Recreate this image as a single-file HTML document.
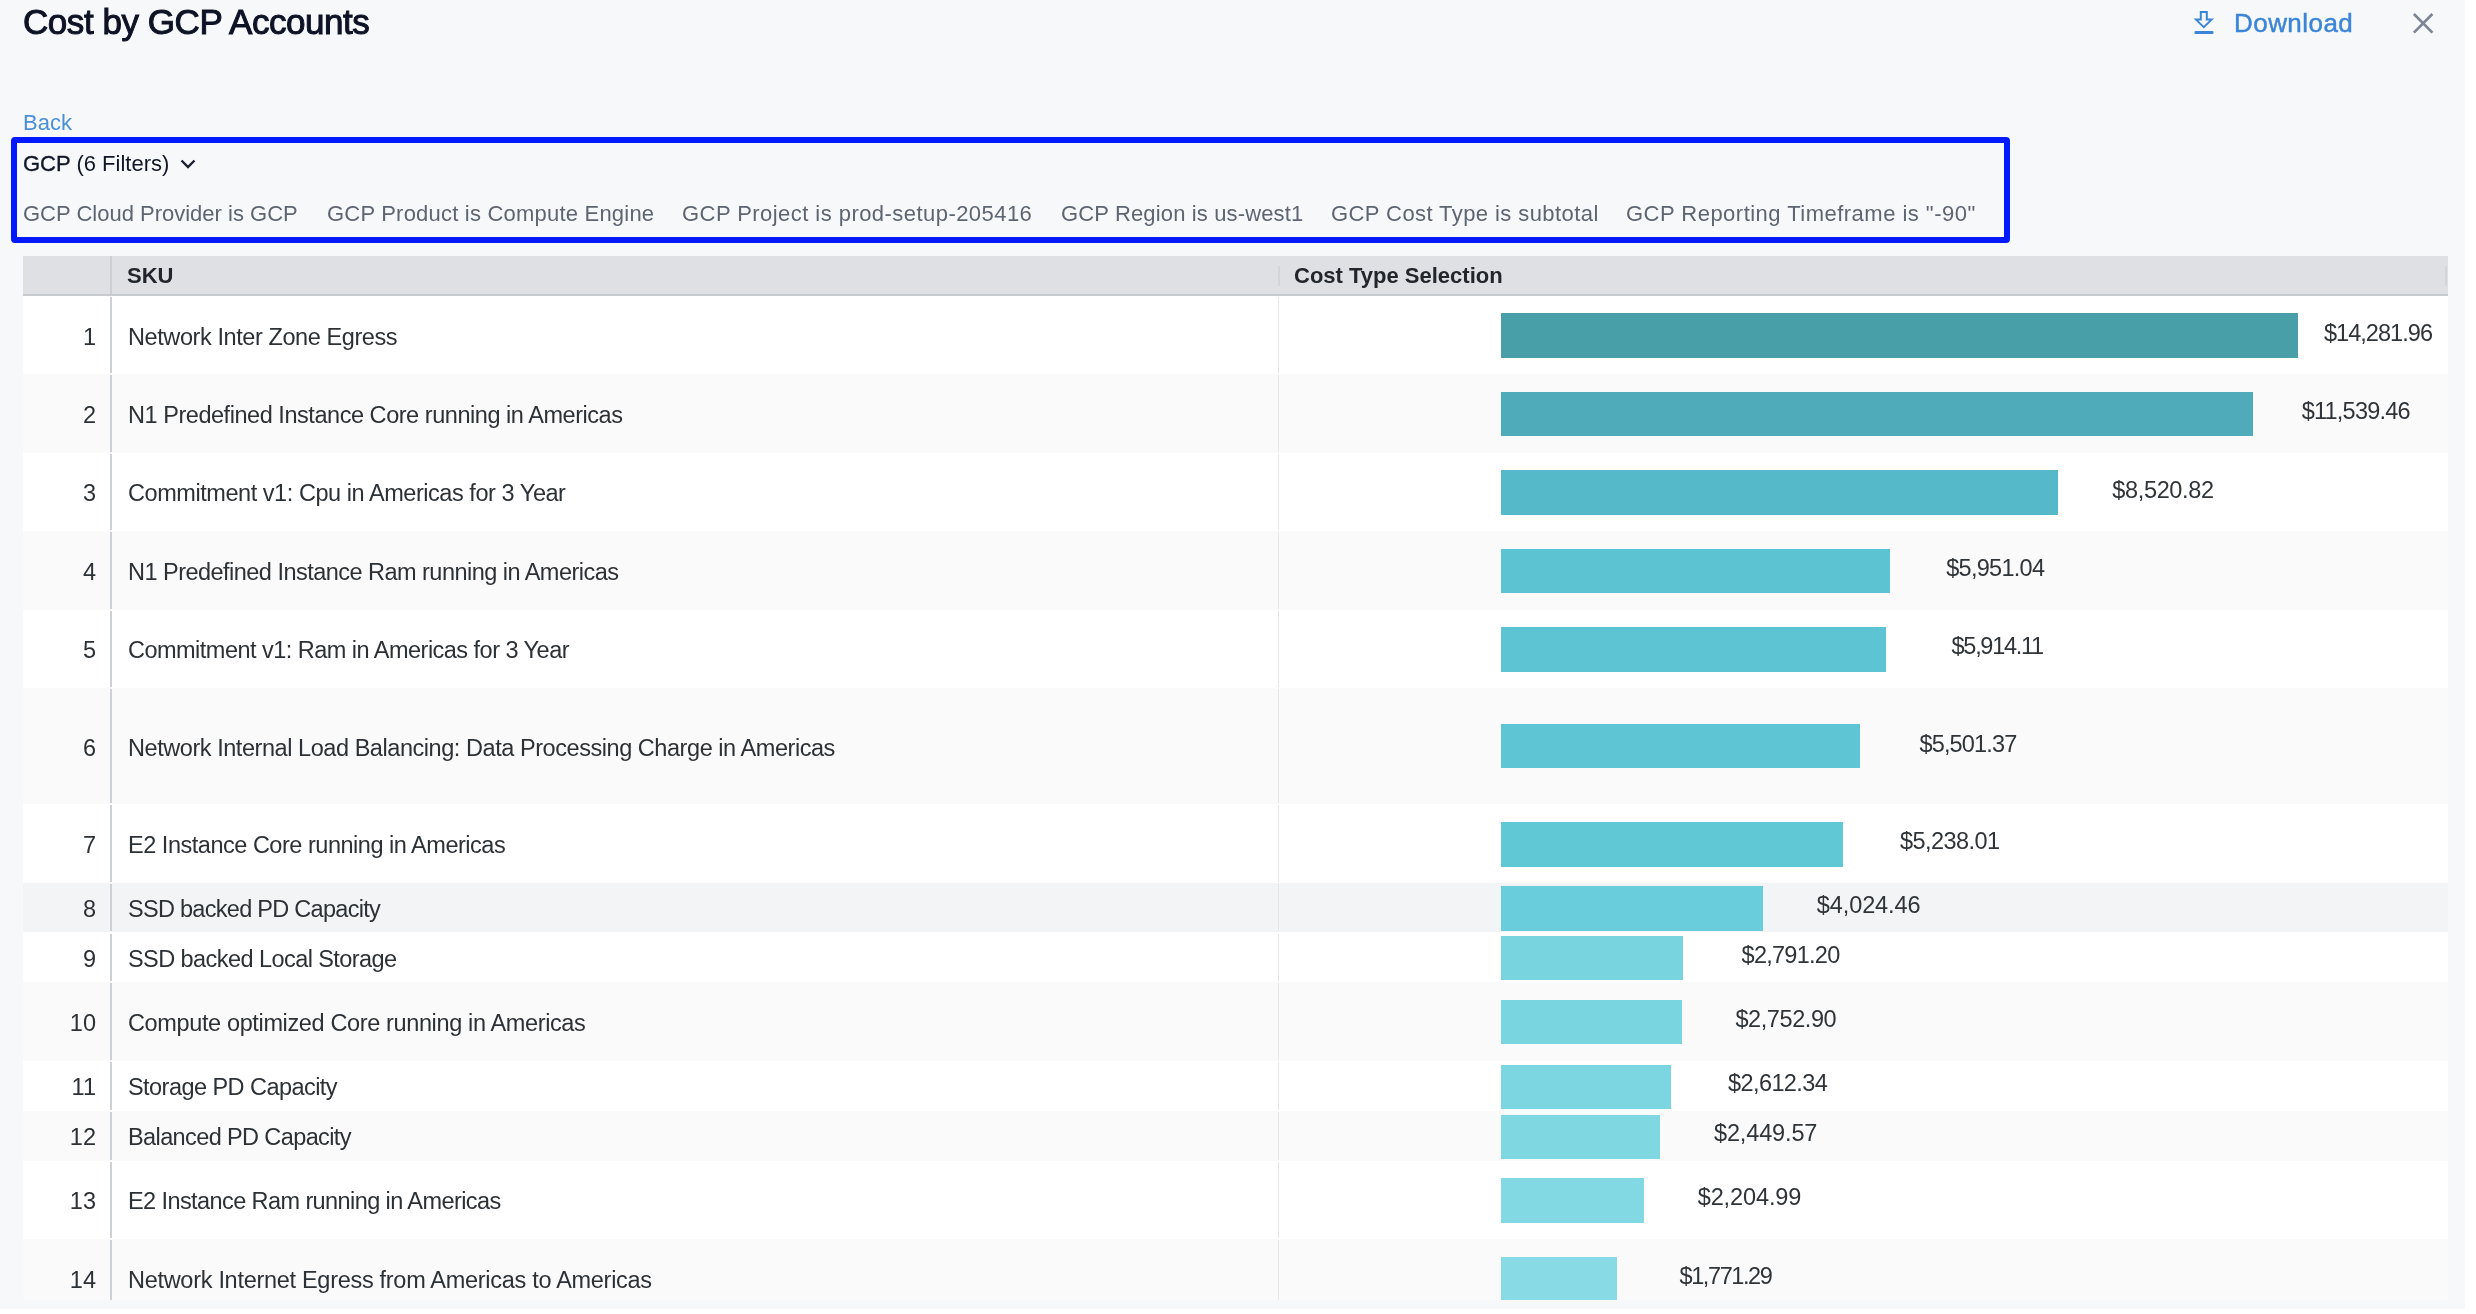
<!DOCTYPE html>
<html>
<head>
<meta charset="utf-8">
<style>
html,body{margin:0;padding:0;background:#ffffff;width:2476px;height:1314px;overflow:hidden;}
body{font-family:"Liberation Sans",sans-serif;position:relative;}
#page{position:absolute;left:0;top:0;width:2465px;height:1308.5px;background:#f7f8fa;overflow:hidden;will-change:transform;}
.t{position:absolute;white-space:nowrap;line-height:1;}
#title{left:23px;top:4.3px;font-size:35px;font-weight:normal;color:#0d1325;letter-spacing:-0.45px;-webkit-text-stroke:1px #0d1325;}
#dl{left:2234px;top:10px;font-size:26px;color:#3b85d8;letter-spacing:0.45px;-webkit-text-stroke:0.45px #3b85d8;}
#back{left:23px;top:112px;font-size:22px;color:#4a90d9;}
#box{position:absolute;left:11px;top:137px;width:1987px;height:93.5px;border:6px solid #0019ff;border-radius:4px;}
#gcp{left:23px;top:152.5px;font-size:22px;color:#0f1626;}
#gcp b{font-weight:normal;-webkit-text-stroke:0.35px #0f1626;}
.f{top:203px;font-size:22px;color:#5d6571;}
#tbl{position:absolute;left:23px;top:256px;width:2425px;height:1044px;overflow:hidden;background:#ffffff;}
#hdr{position:absolute;left:0;top:0;width:2425px;height:38px;background:#dfe0e4;border-bottom:2px solid #c7cace;}
.h{font-size:22px;font-weight:bold;color:#22262c;top:9px;}
.row{position:absolute;left:0;width:2425px;}
.alt{background:#fafafa;}
.hov{background:#f3f4f6;}
.num{position:absolute;right:2352px;font-size:23.5px;color:#2c3136;line-height:1;white-space:nowrap;}
.sku{position:absolute;left:105px;font-size:23.5px;color:#2c3136;line-height:1;white-space:nowrap;}
.vl{position:absolute;left:87px;width:2px;background:#cdd0d5;}
.vl2{position:absolute;left:1255px;width:1px;background:#e4e6e9;}
.bar{position:absolute;left:1478px;height:44.6px;}
.lab{position:absolute;font-size:23.5px;color:#2f3439;line-height:1;white-space:nowrap;}
</style>
</head>
<body>
<div id="page">
  <div class="t" id="title">Cost by GCP Accounts</div>
  <svg style="position:absolute;left:2192px;top:9px" width="24" height="27" viewBox="0 0 24 27">
    <path d="M8.8 3 H14.8 V10.6 H19.6 L11.8 18.2 L4 10.6 H8.8 Z" fill="none" stroke="#3b85d8" stroke-width="2" stroke-linejoin="miter"/>
    <rect x="2.5" y="22.1" width="19" height="2.8" rx="1" fill="#3b85d8"/>
  </svg>
  <div class="t" id="dl">Download</div>
  <svg style="position:absolute;left:2410px;top:10px" width="26" height="26" viewBox="0 0 26 26">
    <path d="M3.9 4 L22.4 22.6 M22.4 4 L3.9 22.6" stroke="#7c8593" stroke-width="2.7" stroke-linecap="butt"/>
  </svg>
  <div class="t" id="back">Back</div>
  <div id="box"></div>
  <div class="t" id="gcp"><b>GCP</b> (6 Filters)</div>
  <svg style="position:absolute;left:179px;top:158px" width="18" height="12" viewBox="0 0 18 12">
    <path d="M2.5 2.5 L9 9 L15.5 2.5" fill="none" stroke="#1a2130" stroke-width="2.4"/>
  </svg>
  <div class="t f" style="left:23px">GCP Cloud Provider is GCP</div>
  <div class="t f" style="left:327px;letter-spacing:0.21px">GCP Product is Compute Engine</div>
  <div class="t f" style="left:682px;letter-spacing:0.45px">GCP Project is prod-setup-205416</div>
  <div class="t f" style="left:1061px;letter-spacing:0.14px">GCP Region is us-west1</div>
  <div class="t f" style="left:1331px;letter-spacing:0.42px">GCP Cost Type is subtotal</div>
  <div class="t f" style="left:1626px;letter-spacing:0.48px">GCP Reporting Timeframe is "-90"</div>

  <div id="tbl">
    <div id="hdr">
      <div style="position:absolute;left:87px;top:0;width:2px;height:38px;background:#cbced3"></div>
      <div class="t h" style="left:104px">SKU</div>
      <div style="position:absolute;left:1255px;top:10px;width:2px;height:20px;background:#d3d5d9"></div>
      <div class="t h" style="left:1271px">Cost Type Selection</div>
      <div style="position:absolute;left:2422px;top:10px;width:2px;height:20px;background:#d3d5d9"></div>
    </div>
    <div id="rows">
<div class="row " style="top:40.0px;height:78.4px"></div>
<div class="vl" style="top:41.0px;height:76.4px"></div>
<div class="vl2" style="top:41.0px;height:76.4px"></div>
<div class="num" style="top:69.60px">1</div>
<div class="sku" style="top:69.60px;letter-spacing:-0.413px">Network Inter Zone Egress</div>
<div class="bar" style="top:57.3px;width:797.0px;background:#499fa8"></div>
<div class="lab" style="top:65.80px;right:15.94px;letter-spacing:-0.944px">$14,281.96</div>
<div class="row alt" style="top:118.4px;height:78.4px"></div>
<div class="vl" style="top:119.4px;height:76.4px"></div>
<div class="vl2" style="top:119.4px;height:76.4px"></div>
<div class="num" style="top:148.00px">2</div>
<div class="sku" style="top:148.00px;letter-spacing:-0.457px">N1 Predefined Instance Core running in Americas</div>
<div class="bar" style="top:135.8px;width:752.0px;background:#4faaba"></div>
<div class="lab" style="top:144.20px;right:38.18px;letter-spacing:-0.778px">$11,539.46</div>
<div class="row " style="top:196.8px;height:78.4px"></div>
<div class="vl" style="top:197.8px;height:76.4px"></div>
<div class="vl2" style="top:197.8px;height:76.4px"></div>
<div class="num" style="top:226.40px">3</div>
<div class="sku" style="top:226.40px;letter-spacing:-0.447px">Commitment v1: Cpu in Americas for 3 Year</div>
<div class="bar" style="top:214.2px;width:556.6px;background:#56b9c9"></div>
<div class="lab" style="top:222.60px;right:234.36px;letter-spacing:-0.363px">$8,520.82</div>
<div class="row alt" style="top:275.2px;height:78.4px"></div>
<div class="vl" style="top:276.2px;height:76.4px"></div>
<div class="vl2" style="top:276.2px;height:76.4px"></div>
<div class="num" style="top:304.80px">4</div>
<div class="sku" style="top:304.80px;letter-spacing:-0.527px">N1 Predefined Instance Ram running in Americas</div>
<div class="bar" style="top:292.6px;width:389.0px;background:#5cc3d2"></div>
<div class="lab" style="top:301.00px;right:403.72px;letter-spacing:-0.725px">$5,951.04</div>
<div class="row " style="top:353.6px;height:78.4px"></div>
<div class="vl" style="top:354.6px;height:76.4px"></div>
<div class="vl2" style="top:354.6px;height:76.4px"></div>
<div class="num" style="top:383.20px">5</div>
<div class="sku" style="top:383.20px;letter-spacing:-0.520px">Commitment v1: Ram in Americas for 3 Year</div>
<div class="bar" style="top:371.0px;width:385.3px;background:#5dc4d3"></div>
<div class="lab" style="top:379.40px;right:405.30px;letter-spacing:-1.300px">$5,914.11</div>
<div class="row alt" style="top:432.0px;height:116.4px"></div>
<div class="vl" style="top:433.0px;height:114.4px"></div>
<div class="vl2" style="top:433.0px;height:114.4px"></div>
<div class="num" style="top:480.60px">6</div>
<div class="sku" style="top:480.60px;letter-spacing:-0.445px">Network Internal Load Balancing: Data Processing Charge in Americas</div>
<div class="bar" style="top:467.8px;width:358.8px;background:#5ec5d4"></div>
<div class="lab" style="top:476.80px;right:431.65px;letter-spacing:-0.850px">$5,501.37</div>
<div class="row " style="top:548.4px;height:78.4px"></div>
<div class="vl" style="top:549.4px;height:76.4px"></div>
<div class="vl2" style="top:549.4px;height:76.4px"></div>
<div class="num" style="top:578.00px">7</div>
<div class="sku" style="top:578.00px;letter-spacing:-0.480px">E2 Instance Core running in Americas</div>
<div class="bar" style="top:566.0px;width:342.3px;background:#60c7d5"></div>
<div class="lab" style="top:574.20px;right:448.35px;letter-spacing:-0.550px">$5,238.01</div>
<div class="row hov" style="top:626.8px;height:49.7px"></div>
<div class="vl" style="top:627.8px;height:47.7px"></div>
<div class="vl2" style="top:627.8px;height:47.7px"></div>
<div class="num" style="top:642.05px">8</div>
<div class="sku" style="top:642.05px;letter-spacing:-0.714px">SSD backed PD Capacity</div>
<div class="bar" style="top:630.0px;width:262.4px;background:#69cddb"></div>
<div class="lab" style="top:638.25px;right:527.49px;letter-spacing:-0.087px">$4,024.46</div>
<div class="row " style="top:676.5px;height:49.7px"></div>
<div class="vl" style="top:677.5px;height:47.7px"></div>
<div class="vl2" style="top:677.5px;height:47.7px"></div>
<div class="num" style="top:691.75px">9</div>
<div class="sku" style="top:691.75px;letter-spacing:-0.565px">SSD backed Local Storage</div>
<div class="bar" style="top:679.9px;width:182.0px;background:#78d4df"></div>
<div class="lab" style="top:687.95px;right:608.54px;letter-spacing:-0.737px">$2,791.20</div>
<div class="row alt" style="top:726.2px;height:78.7px"></div>
<div class="vl" style="top:727.2px;height:76.7px"></div>
<div class="vl2" style="top:727.2px;height:76.7px"></div>
<div class="num" style="top:755.95px">10</div>
<div class="sku" style="top:755.95px;letter-spacing:-0.366px">Compute optimized Core running in Americas</div>
<div class="bar" style="top:743.9px;width:180.5px;background:#79d5e0"></div>
<div class="lab" style="top:752.15px;right:611.82px;letter-spacing:-0.425px">$2,752.90</div>
<div class="row " style="top:804.9px;height:49.9px"></div>
<div class="vl" style="top:805.9px;height:47.9px"></div>
<div class="vl2" style="top:805.9px;height:47.9px"></div>
<div class="num" style="top:820.25px">11</div>
<div class="sku" style="top:820.25px;letter-spacing:-0.550px">Storage PD Capacity</div>
<div class="bar" style="top:808.5px;width:169.6px;background:#7cd6e1"></div>
<div class="lab" style="top:816.45px;right:620.80px;letter-spacing:-0.600px">$2,612.34</div>
<div class="row alt" style="top:854.8px;height:49.8px"></div>
<div class="vl" style="top:855.8px;height:47.8px"></div>
<div class="vl2" style="top:855.8px;height:47.8px"></div>
<div class="num" style="top:870.10px">12</div>
<div class="sku" style="top:870.10px;letter-spacing:-0.611px">Balanced PD Capacity</div>
<div class="bar" style="top:858.5px;width:158.8px;background:#7fd7e2"></div>
<div class="lab" style="top:866.30px;right:630.74px;letter-spacing:-0.138px">$2,449.57</div>
<div class="row " style="top:904.6px;height:78.4px"></div>
<div class="vl" style="top:905.6px;height:76.4px"></div>
<div class="vl2" style="top:905.6px;height:76.4px"></div>
<div class="num" style="top:934.20px">13</div>
<div class="sku" style="top:934.20px;letter-spacing:-0.588px">E2 Instance Ram running in Americas</div>
<div class="bar" style="top:922.2px;width:143.0px;background:#82d8e3"></div>
<div class="lab" style="top:930.40px;right:646.70px;letter-spacing:-0.100px">$2,204.99</div>
<div class="row alt" style="top:983.0px;height:78.4px"></div>
<div class="vl" style="top:984.0px;height:76.4px"></div>
<div class="vl2" style="top:984.0px;height:76.4px"></div>
<div class="num" style="top:1012.60px">14</div>
<div class="sku" style="top:1012.60px;letter-spacing:-0.292px">Network Internet Egress from Americas to Americas</div>
<div class="bar" style="top:1000.8px;width:116.4px;background:#88dae5"></div>
<div class="lab" style="top:1008.80px;right:676.61px;letter-spacing:-1.412px">$1,771.29</div>
</div>
  </div>
</div>
</body>
</html>
